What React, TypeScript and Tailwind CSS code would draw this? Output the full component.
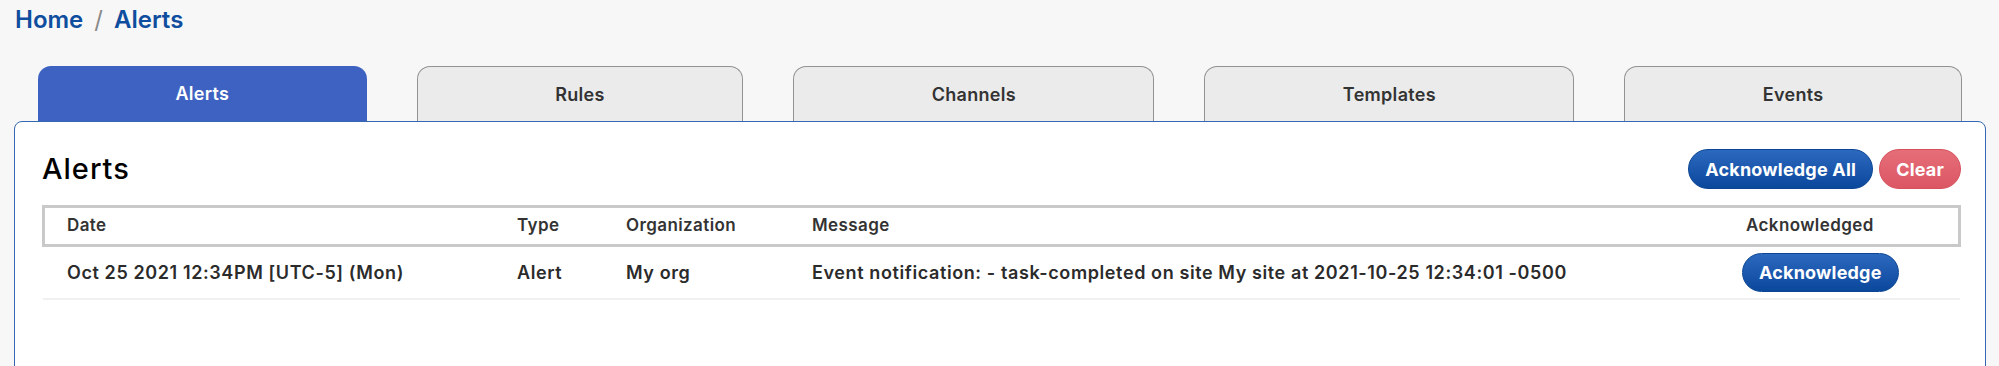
import React, { useState } from 'react';

const tabs = ['Alerts', 'Rules', 'Channels', 'Templates', 'Events'];

const alerts = [
  {
    id: 1,
    date: 'Oct 25 2021 12:34PM [UTC-5] (Mon)',
    type: 'Alert',
    org: 'My org',
    message: 'Event notification: - task-completed on site My site at 2021-10-25 12:34:01 -0500',
  },
];

const cols = 'grid grid-cols-[450px_109px_186px_934px_1fr]';

const App: React.FC = () => {
  const [active, setActive] = useState('Alerts');

  return (
    <div className="min-h-screen bg-[#f7f7f7] px-[14px] pr-[13px] font-['Inter','Liberation_Sans',sans-serif] overflow-hidden">
      {/* Breadcrumb */}
      <div className="flex items-center gap-[11px] pt-[5px] h-[66px] items-start text-[24px] font-semibold text-[#0f4d9e] leading-[30px]">
        <span className="pl-[1px]">Home</span>
        <span className="text-[#8a8a8a] font-normal">/</span>
        <span>Alerts</span>
      </div>

      {/* Tabs */}
      <div className="flex gap-[50px] px-[24px] h-[55px]">
        {tabs.map(t => (
          <button
            key={t}
            onClick={() => setActive(t)}
            className={`flex-auto h-full rounded-t-[13px] text-[18px] tracking-[0.3px] font-semibold flex items-center justify-center ${
              active === t
                ? 'bg-[#3e62c1] text-white'
                : 'bg-[#ebebeb] text-[#333] border-[1.5px] border-b-0 border-[#929292]'
            }`}
          >
            {t}
          </button>
        ))}
      </div>

      {/* Panel */}
      <div className="bg-white border-[1.5px] border-[#3568b3] rounded-t-[8px] min-h-[400px] px-[26px] pt-[27px] pr-[24px]">
        <div className="flex items-center justify-between h-[40px] ml-[1px]">
          <h2 className="text-[29px] font-medium text-black tracking-[1px]">Alerts</h2>
          <div className="flex gap-[6px]">
            <button className="h-[40px] px-[16px] rounded-full border border-[#0b4593] bg-linear-to-b from-[#2b69bf] to-[#0a489c] text-white text-[18px] tracking-[0.2px] font-bold">
              Acknowledge All
            </button>
            <button className="h-[40px] px-[16px] rounded-full border border-[#d6505e] bg-linear-to-b from-[#e56e79] to-[#dc5664] text-white text-[18px] tracking-[0.2px] font-bold">
              Clear
            </button>
          </div>
        </div>

        <div className="mt-[16px] ml-[1px]">
          <div className={`${cols} h-[42px] items-center border-[3px] border-[#c9c9c9] text-[17px] tracking-[0.4px] font-semibold text-[#333]`}>
            <div className="pl-[22px]">Date</div>
            <div className="pl-[22px]">Type</div>
            <div className="pl-[22px]">Organization</div>
            <div className="pl-[22px]">Message</div>
            <div className="pl-[22px]">Acknowledged</div>
          </div>
          {alerts.map(a => (
            <div
              key={a.id}
              className={`${cols} h-[53px] items-center border-b-2 border-[#f0f0f0] mx-[1px] text-[18px] tracking-[0.6px] font-semibold text-[#2b2b2b]`}
            >
              <div className="pl-[24px]">{a.date}</div>
              <div className="pl-[24px]">{a.type}</div>
              <div className="pl-[24px]">{a.org}</div>
              <div className="pl-[24px] whitespace-nowrap">{a.message}</div>
              <div className="pl-[20px]">
                <button className="h-[39px] px-[16px] rounded-full border border-[#0b4593] bg-linear-to-b from-[#2b69bf] to-[#0a489c] text-white text-[18px] tracking-[0.2px] font-bold">
                  Acknowledge
                </button>
              </div>
            </div>
          ))}
        </div>
      </div>
    </div>
  );
};

export default App;
